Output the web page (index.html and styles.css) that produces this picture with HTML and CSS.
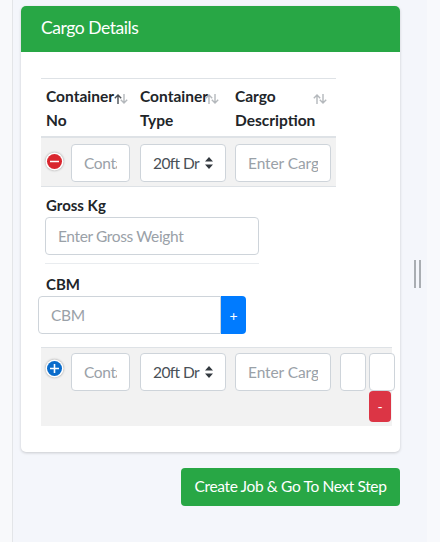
FILE: index.html
```html
<!DOCTYPE html>
<html>
<head>
	<title>Cargo Details</title>
	<link rel="stylesheet" href="styles.css">
</head>
<body>
<div class="page">
	<div class="rail"></div>
	<div class="main">
		<div class="card">
			<div class="card-head">Cargo Details</div>
			<div class="card-body">
				<div class="head-row">
					<div class="th th-no">Container No<svg class="sort" viewBox="0 0 14 10"><path class="up on" d="M4 10V1M.8 4.200L4 1l3.200 3.200"/><path class="down" d="M10 0v9M6.800 5.800L10 9l3.200-3.200"/></svg></div>
					<div class="th th-type">Container Type<svg class="sort" viewBox="0 0 14 10"><path class="up" d="M4 10V1M.8 4.200L4 1l3.200 3.200"/><path class="down" d="M10 0v9M6.800 5.800L10 9l3.200-3.200"/></svg></div>
					<div class="th th-desc">Cargo Description<svg class="sort" viewBox="0 0 14 10"><path class="up" d="M4 10V1M.8 4.200L4 1l3.200 3.200"/><path class="down" d="M10 0v9M6.800 5.800L10 9l3.200-3.200"/></svg></div>
				</div>
				<div class="row">
					<span class="toggle minus"><svg viewBox="0 0 15 15"><path d="M3 7.500h9"/></svg></span>
					<input class="field f-no" placeholder="Container No">
					<div class="field f-type">20ft Dr<svg class="updown" viewBox="0 0 8 12"><path d="M4 0l4 4.600H0zM4 12L0 7.400h8z"/></svg></div>
					<input class="field f-desc" placeholder="Enter Cargo Description">
				</div>
				<div class="block">
					<label class="lbl">Gross Kg</label>
					<input class="field f-gross" placeholder="Enter Gross Weight">
					<hr class="rule">
					<label class="lbl">CBM</label>
					<div class="cbm">
						<input class="field f-cbm" placeholder="CBM">
						<button class="btn-add">+</button>
					</div>
				</div>
				<div class="row row2">
					<span class="toggle plus"><svg viewBox="0 0 15 15"><path d="M3 7.500h9M7.500 3v9"/></svg></span>
					<input class="field f-no" placeholder="Container No">
					<div class="field f-type">20ft Dr<svg class="updown" viewBox="0 0 8 12"><path d="M4 0l4 4.600H0zM4 12L0 7.400h8z"/></svg></div>
					<input class="field f-desc" placeholder="Enter Cargo Description">
					<input class="field f-small">
					<div class="stack">
						<input class="field f-small">
						<button class="btn-del">-</button>
					</div>
				</div>
			</div>
		</div>
		<div class="actions"><button class="btn-next">Create Job &amp; Go To Next Step</button></div>
	</div>
	<div class="gutter"><span class="handle"></span></div>
</div>
</body>
</html>
```

FILE: styles.css
```css
*{
	box-sizing: border-box;
	padding: 0;
	margin: 0;
}
html,body{
	height: 100%;
	overflow: hidden;
}
body{
	font-family: "Lato", "Open Sans", sans-serif;
	font-size: 15.5px;
	letter-spacing: -.37px;
	color: #212529;
	background: #f8f9fc;
}
.page{
	display: flex;
	height: 542px;
}
.rail{
	width: 13px;
	flex: none;
	background: #f8f9fb;
	border-right: 1px solid #e3e5e8;
}
.main{
	width: 394px;
	flex: none;
	padding: 6px 7px 0 8px;
	background: #f4f6fb;
}
.card{
	width: 379px;
	height: 446px;
	background: #fff;
	border-radius: 5px;
	box-shadow: 0 1px 3px rgba(0,0,0,.18);
	overflow: hidden;
}
.card-head{
	height: 46px;
	padding: 0 20px;
	line-height: 44px;
	font-size: 17.5px;
	letter-spacing: -.45px;
	color: #fff;
	background: #28a745;
}
.card-body{
	padding: 26px 8px 0 20px;
}
.head-row{
	display: flex;
	width: 295px;
	height: 60px;
	border-top: 1px solid #dee2e6;
	border-bottom: 2px solid #dee2e6;
}
.th{
	position: relative;
	padding: 5px 4px 0 5px;
	font-weight: 700;
	line-height: 24px;
	letter-spacing: 0;
}
.th-no{ width: 95px; }
.th-type{ width: 94px; padding-left: 4px; }
.th-desc{ width: 106px; }
.sort{
	position: absolute;
	top: 15px;
	width: 14px;
	height: 10px;
	fill: none;
	stroke: #b4b8bc;
	stroke-width: 1.400;
}
.sort .on{ stroke: #4a4f54; }
.th-no .sort{ right: 8px; }
.th-type .sort{ right: 11px; }
.th-desc .sort{ right: 9px; }
.row{
	display: flex;
	width: 295px;
	height: 49px;
	padding: 6px 0 0 6px;
	background: #f2f2f2;
	border-bottom: 1px solid #dee2e6;
}
.toggle{
	flex: none;
	width: 15px;
	height: 15px;
	margin: 10px 9px 0 0;
	border-radius: 50%;
	box-shadow: 0 0 0 1.500px #fff, 0 0 2px 2px rgba(0,0,0,.25);
}
.toggle svg{
	display: block;
	fill: none;
	stroke: #fff;
	stroke-width: 1.600;
}
.minus{ background: #d9262e; }
.plus{
	margin-top: 8px;
	background: #0a6ccb;
}
.field{
	display: block;
	height: 38px;
	padding: 0 12px;
	border: 1px solid #ced4da;
	border-radius: 4px;
	background: #fff;
	font-family: inherit;
	font-size: 15.5px;
	letter-spacing: -.37px;
	color: #495057;
}
.field::placeholder{
	color: #9aa1a8;
	opacity: 1;
}
.f-no{ width: 59px; flex: none; }
.f-type{
	position: relative;
	width: 86px;
	flex: none;
	margin-left: 10px;
	line-height: 37px;
	letter-spacing: -.6px;
}
.updown{
	position: absolute;
	top: 12px;
	right: 12px;
	width: 8px;
	height: 12px;
	fill: #343a40;
}
.f-desc{
	width: 96px;
	flex: none;
	margin-left: 9px;
	letter-spacing: -.1px;
}
.block{
	width: 240px;
	padding-top: 6px;
}
.lbl{
	display: block;
	margin-left: 5px;
	font-size: 15px;
	font-weight: 700;
	letter-spacing: 0;
	line-height: 24px;
}
.f-gross{
	width: 214px;
	margin: 0 0 8px 4px;
}
.rule{
	width: 214px;
	margin: 0 0 8px 4px;
	border: 0;
	border-top: 1px solid #e9ecef;
}
.cbm{
	display: flex;
	margin-left: -3px;
}
.f-cbm{
	width: 183px;
	border-radius: 4px 0 0 4px;
}
.btn-add{
	width: 25px;
	height: 38px;
	border: 0;
	border-radius: 0 4px 4px 0;
	background: #007bff;
	color: #fff;
	font-family: inherit;
	font-size: 14px;
}
.row2{
	width: 351px;
	height: 79px;
	margin-top: 13px;
	border-top: 1px solid #dee2e6;
	border-bottom: 0;
	padding-top: 5px;
	background: #f2f2f2;
}
.f-small{
	width: 26px;
	flex: none;
	padding: 0;
}
.row2 > .f-small{ margin-left: 9px; }
.stack{
	flex: none;
	width: 26px;
	margin-left: 3px;
}
.btn-del{
	display: block;
	width: 22px;
	height: 31px;
	border: 0;
	border-radius: 4px;
	background: #dc3545;
	color: #fff;
	font-family: inherit;
	font-size: 14px;
}
.actions{
	display: flex;
	justify-content: flex-end;
	width: 379px;
	margin-top: 16px;
}
.btn-next{
	width: 219px;
	height: 38px;
	padding-bottom: 2px;
	border: 0;
	border-radius: 4px;
	background: #28a745;
	color: #fff;
	font-family: inherit;
	font-size: 15.5px;
	letter-spacing: -.37px;
}
.gutter{
	position: relative;
	flex: 1;
	display: flex;
	background: #f4f6fb;
}
.gutter::after{
	content: "";
	position: absolute;
	top: 0;
	bottom: 0;
	left: 20px;
	right: 0;
	background: #f8f9fc;
}
.handle{
	width: 7px;
	height: 28px;
	margin: 260px 0 0 7px;
	border-left: 2px solid #a9adb2;
	border-right: 2px solid #a9adb2;
}
```
